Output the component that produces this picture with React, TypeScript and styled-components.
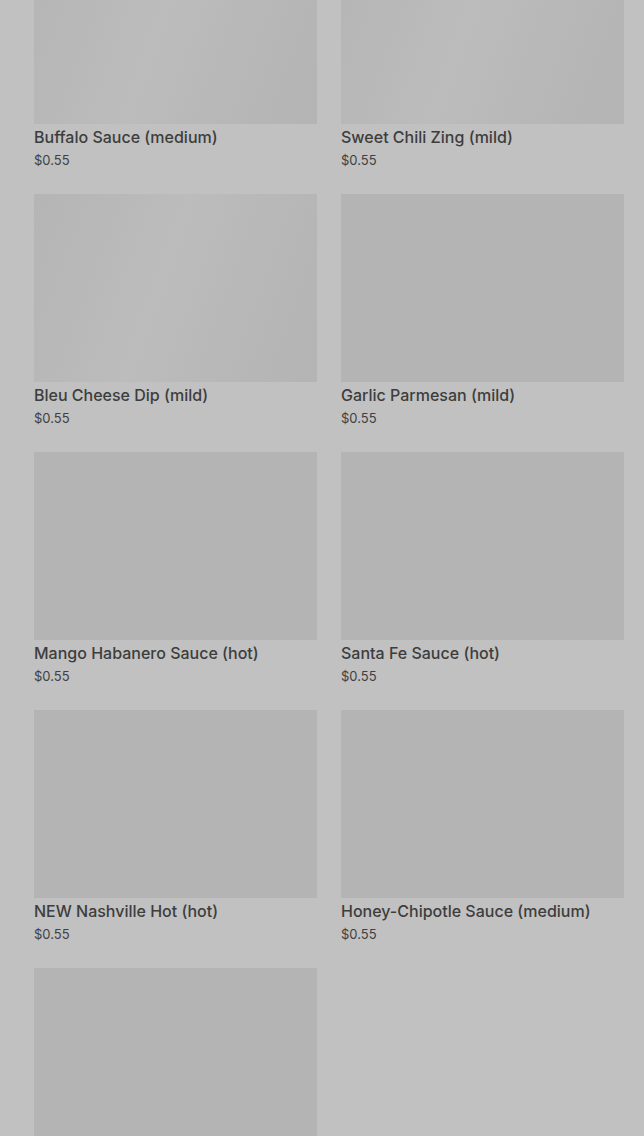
import { createGlobalStyle, styled } from 'styled-components';

interface Sauce {
  id: string;
  name?: string;
  price?: string;
  loading?: boolean;
}

// the last tile is still scrolled below the fold, only its picture shows
const sauces: Sauce[] = [
  { id: 'buffalo', name: 'Buffalo Sauce (medium)', price: '$0.55', loading: true },
  { id: 'chili', name: 'Sweet Chili Zing (mild)', price: '$0.55', loading: true },
  { id: 'bleu', name: 'Bleu Cheese Dip (mild)', price: '$0.55', loading: true },
  { id: 'garlic', name: 'Garlic Parmesan (mild)', price: '$0.55' },
  { id: 'mango', name: 'Mango Habanero Sauce (hot)', price: '$0.55' },
  { id: 'santafe', name: 'Santa Fe Sauce (hot)', price: '$0.55' },
  { id: 'nashville', name: 'NEW Nashville Hot (hot)', price: '$0.55' },
  { id: 'chipotle', name: 'Honey-Chipotle Sauce (medium)', price: '$0.55' },
  { id: 'next' },
];

const GlobalStyle = createGlobalStyle`
  html, body {
    margin: 0;
    padding: 0;
    background: #c1c1c1;
    overflow: hidden;
  }
  body {
    font-family: Inter, 'Noto Sans', 'Liberation Sans', sans-serif;
  }
`;

const Page = styled.div`
  height: 1136px;
  overflow: hidden;
  background: #c1c1c1;
`;

const Grid = styled.div`
  display: grid;
  grid-template-columns: 283px 283px;
  column-gap: 24px;
  row-gap: 25px;
  padding: 0 20px 0 34px;
  margin-top: -64px;
`;

const Card = styled.div`
  display: flex;
  flex-direction: column;
`;

const Thumb = styled.div<{ $loading?: boolean }>`
  height: 188px;
  background: ${({ $loading }) =>
    $loading
      ? 'linear-gradient(110deg, #b5b5b5 0%, #b8b8b8 22%, #bcbcbc 45%, #b9b9b9 62%, #b6b6b6 82%, #b4b4b4 100%)'
      : '#b4b4b4'};
`;

const Name = styled.h3`
  margin: 3px 0 0 0;
  font-size: 16px;
  line-height: 20px;
  font-weight: 500;
  color: #3d3d3d;
  letter-spacing: 0;
`;

const Price = styled.span`
  margin-top: 4px;
  font-size: 13px;
  line-height: 18px;
  color: #404040;
`;

function SauceCard({ sauce }: { sauce: Sauce }) {
  return (
    <Card>
      <Thumb $loading={sauce.loading} />
      {sauce.name && <Name>{sauce.name}</Name>}
      {sauce.price && <Price>{sauce.price}</Price>}
    </Card>
  );
}

export default function App() {
  return (
    <Page>
      <GlobalStyle />
      <Grid>
        {sauces.map((s) => (
          <SauceCard key={s.id} sauce={s} />
        ))}
      </Grid>
    </Page>
  );
}
